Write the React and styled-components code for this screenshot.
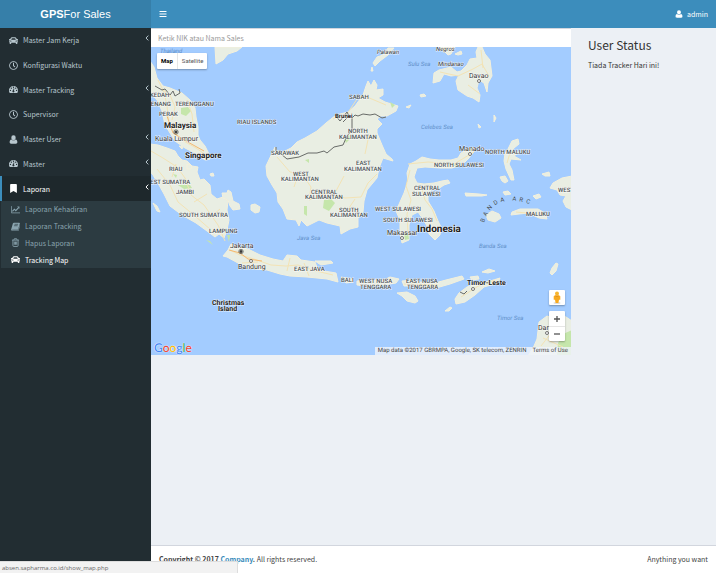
import React from "react";
import styled, { createGlobalStyle, css } from "styled-components";
import { FaBars, FaBookmark, FaCar, FaRegClock } from "react-icons/fa";

const GlobalStyle = createGlobalStyle`
  *, *::before, *::after { box-sizing: border-box; }
  body {
    margin: 0;
    background: #ecf0f5;
    color: #333;
    font-family: "Noto Sans CJK SC", "Noto Sans", sans-serif;
    font-size: 7px;
    line-height: 12px;
  }
  button, input { font: inherit; margin: 0; padding: 0; border: 0; }
  a { color: inherit; text-decoration: none; }
  ul { margin: 0; padding: 0; list-style: none; }
`;

const Page = styled.div`
  display: grid;
  grid-template-columns: 151px 1fr;
  grid-template-rows: 28px 1fr;
  min-height: 100vh;
`;

const Logo = styled.a`
  display: flex;
  align-items: center;
  justify-content: center;
  background: #367fa9;
  color: #fff;
  font-family: "Liberation Sans", Arial, sans-serif;
  font-size: 11px;
  line-height: 16px;
`;

const TopBar = styled.header`
  display: flex;
  align-items: center;
  justify-content: space-between;
  padding: 0 8px;
  background: #3c8dbc;
  color: #fff;
`;

const BarButton = styled.button`
  display: flex;
  align-items: center;
  gap: 4px;
  background: none;
  color: #fff;
  cursor: pointer;
  svg { width: 8px; height: 8px; }
`;

const Sidebar = styled.nav`
  background: #222d32;
`;

const Menu = styled.ul`
  display: grid;
  grid-template-rows: repeat(7, 1fr);
  height: 173px;
`;

const activeItem = css`
  background: #1e282c;
  border-left-color: #3c8dbc;
  color: #fff;
`;

const MenuLink = styled.a`
  display: grid;
  grid-template-columns: 10px 1fr 4px;
  gap: 4px;
  align-items: center;
  height: 100%;
  padding: 0 2px 0 7px;
  border-left: 2px solid transparent;
  color: #b8c7ce;
  ${(p) => p.$active && activeItem}
  > svg { width: 9px; height: 9px; }
  > svg:last-child { width: 4px; height: 6px; margin-bottom: 4px; }
`;

const SubMenu = styled.ul`
  display: grid;
  grid-template-rows: repeat(4, 1fr);
  height: 67px;
  margin-left: 1px;
  background: #2c3b41;
`;

const SubLink = styled.a`
  display: grid;
  grid-template-columns: 10px 1fr;
  gap: 4px;
  align-items: center;
  height: 100%;
  padding-left: 10px;
  color: ${(p) => (p.$active ? "#fff" : "#8aa4af")};
  svg { width: 9px; height: 9px; }
`;

const Main = styled.div`
  display: flex;
  flex-direction: column;
  min-width: 0;
`;

const Content = styled.main`
  flex: 1;
  display: grid;
  grid-template-columns: 420fr 145fr;
  align-items: start;
`;

const SearchBox = styled.input`
  display: block;
  width: 100%;
  height: 19px;
  padding: 0 7px;
  border-top: 1px solid #d2d6de;
  background: #fff;
  color: #555;
  outline: none;
  &::placeholder { color: #999; opacity: 1; }
`;

const MapFrame = styled.div`
  position: relative;
  height: 308px;
  overflow: hidden;
  background: #a3ccff;
  font-family: Roboto, sans-serif;
  text-rendering: geometricPrecision;
`;

const MapDrawing = styled.svg`
  display: block;
  width: 100%;
  height: 100%;
`;

const TypeSwitch = styled.div`
  position: absolute;
  top: 6px;
  left: 6px;
  display: flex;
  height: 16px;
  background: #fff;
  border-radius: 1px;
  box-shadow: 0 1px 2px rgba(0, 0, 0, 0.3);
`;

const TypeButton = styled.button`
  padding: 0 4px;
  background: none;
  color: ${(p) => (p.$active ? "#000" : "#565656")};
  font-size: 6px;
  font-weight: ${(p) => (p.$active ? 700 : 400)};
  & + & { border-left: 1px solid #e6e6e6; }
`;

const MapTools = styled.div`
  position: absolute;
  right: 6px;
  bottom: 14px;
  display: grid;
  gap: 6px;
  width: 16px;
`;

const ToolGroup = styled.div`
  display: grid;
  background: #fff;
  border-radius: 1px;
  box-shadow: 0 1px 2px rgba(0, 0, 0, 0.3);
`;

const ToolButton = styled.button`
  display: grid;
  place-items: center;
  height: 15px;
  background: none;
  & + & { border-top: 1px solid #e6e6e6; }
`;

const GoogleMark = styled.a`
  position: absolute;
  left: 3px;
  bottom: 0;
  font-family: Lato, sans-serif;
  font-size: 12px;
  font-weight: 500;
  line-height: 15px;
  text-shadow: 0 0 1px #fff, 0 0 1px #fff;
`;

const Letter = styled.span`
  color: ${(p) => p.$tint};
`;

const Attribution = styled.div`
  position: absolute;
  right: 0;
  bottom: 0;
  display: flex;
  gap: 6px;
  padding: 0 3px;
  background: rgba(240, 244, 250, 0.8);
  color: #444;
  font-size: 6px;
  line-height: 8px;
`;

const Status = styled.section`
  padding: 8px 17px;
  h1 {
    margin: 0 0 6px;
    font-size: 12px;
    font-weight: 400;
    line-height: 17px;
  }
  p { margin: 0; }
`;

const Footer = styled.footer`
  display: flex;
  justify-content: space-between;
  height: 28px;
  padding: 7px 8px;
  border-top: 1px solid #d2d6de;
  background: #fff;
  color: #444;
  a { color: #3c8dbc; }
`;

const LinkHint = styled.div`
  position: fixed;
  left: 0;
  bottom: 0;
  width: 238px;
  height: 12px;
  padding-left: 2px;
  border-top: 1px solid #ddd;
  border-right: 1px solid #ddd;
  background: #f2f2f2;
  color: #666;
  font-family: "Open Sans", sans-serif;
  font-size: 6px;
`;

const UserIcon = () => (
  <svg viewBox="0 0 14 14" fill="currentColor" aria-hidden="true">
    <path d="M7 0.5a3.4 3.4 0 0 1 3.4 3.6C10.400 6.200 9 8 7 8S3.600 6.200 3.600 4.100A3.400 3.400 0 0 1 7 .5zM3.800 6.900C5.500 9.300 8.500 9.300 10.200 6.900 12.300 7 13 9 13 11.400c0 1.400-.9 2.100-2.100 2.100H3.100C1.900 13.500 1 12.800 1 11.400 1 9 1.700 7 3.800 6.900z" />
  </svg>
);

const GaugeIcon = () => (
  <svg viewBox="0 0 14 14" aria-hidden="true">
    <path fill="currentColor" d="M7 1.500a7 7 0 0 1 7 7c0 1.400-.4 2.700-1.100 3.800H1.100A7 7 0 0 1 7 1.500z" />
    <g fill="#222d32">
      <circle cx="2.200" cy="8.500" r="1" /><circle cx="3.700" cy="5" r="1" /><circle cx="7" cy="3.500" r="1" />
      <circle cx="10.400" cy="5" r="1" /><circle cx="11.800" cy="8.500" r="1" />
      <path d="M7.300 5.200l1 .3-.6 3a1.600 1.600 0 1 1-1.200-.2z" />
    </g>
  </svg>
);

const ChartIcon = () => (
  <svg viewBox="0 0 16 14" fill="none" stroke="currentColor" aria-hidden="true">
    <path strokeWidth="1.400" d="M.7 1v12H16" />
    <path strokeWidth="2" d="M2.500 10.500L6 6.500l2.500 2.500 5-5.500" />
    <path fill="currentColor" stroke="none" d="M10.800 1.500H15v4.200z" />
  </svg>
);

const BookIcon = () => (
  <svg viewBox="0 0 14 14" aria-hidden="true">
    <path fill="currentColor" d="M4.600 1h8.100c1 0 1.300.7 1.100 1.500l-2.500 8.400c-.3.900-.8 1.300-1.700 1.300H2.400c-.6 0-.8.3-.6.600.2.300.5.300.9.300h7.400c.7 0 1-.3 1.200-.8L13.700 5c.5.300.4.700.3 1.200l-2.200 6.900c-.3.700-.8.900-1.600.9H2.400C.9 14-.2 12.500.3 11.200L2.900 2.500C3.200 1.500 3.700 1 4.600 1z" />
    <path stroke="#2c3b41" d="M5.500 3.600H11M4.800 5.800h5.500" />
  </svg>
);

const TrashIcon = () => (
  <svg viewBox="0 0 14 14" fill="none" stroke="currentColor" strokeWidth="1.400" aria-hidden="true">
    <path d="M1.500 3.300h11M4.500 3l.7-1.800h3.600L9.500 3M3 3.500v8.300c0 .8.400 1.300 1 1.300h6c.6 0 1-.5 1-1.300V3.500M5.200 5.500v5M7 5.500v5M8.800 5.500v5" />
  </svg>
);

const Chevron = () => (
  <svg viewBox="0 0 4 6" fill="none" stroke="currentColor" aria-hidden="true">
    <path d="M3.300.6L1 3l2.300 2.400" />
  </svg>
);

const Pegman = () => (
  <svg width="8" height="13" viewBox="0 0 8 13" aria-hidden="true">
    <ellipse cx="4" cy="12" rx="3.500" ry="1" fill="#ddd" />
    <circle cx="4" cy="2.400" r="2" fill="#f7b52c" />
    <path fill="#f7a91e" d="M2 4.300h4l1.300 1v3.500H6l-.6 3.200H2.600L2 8.800H.7V5.300z" />
    <path fill="#cf7b14" d="M2.600 4.400L4 5.200l1.400-.8v1.100H2.600z" />
  </svg>
);

const menu = [
  { label: "Master Jam Kerja", Icon: FaCar, nested: true },
  { label: "Konfigurasi Waktu", Icon: FaRegClock },
  { label: "Master Tracking", Icon: GaugeIcon, nested: true },
  { label: "Supervisor", Icon: FaRegClock },
  { label: "Master User", Icon: UserIcon, nested: true },
  { label: "Master", Icon: GaugeIcon, nested: true },
  { label: "Laporan", Icon: FaBookmark, nested: true, active: true },
];

const reports = [
  { label: "Laporan Kehadiran", Icon: ChartIcon },
  { label: "Laporan Tracking", Icon: BookIcon },
  { label: "Hapus Laporan", Icon: TrashIcon },
  { label: "Tracking Map", Icon: FaCar, active: true },
];

const land = [
  "M150 61l4 6 3 11 6 8 7 2 12 5 8 7 5 8 1 9 2 10 0 8 2 5 5 6 4 8 1 5-5 1-8-6-12-6-10-7-5-8-5-8-3-14-5-11-7-8z",
  "M150 144l8 1 9 3 8 3 3 5 4 4 5 1 5 5 6 1-1 5 3 8 4-1 6 6 1 9 6 5 6-2 5 4-1 9 2 10-2 10-3 8-5-4-4 3-8-6-11-8-14-8-12-9-6-12-5-9-6-10-5-6z",
  "M222 193l5 0 1-3 3 2 2 9 6 3 1 5-7 1-3-4-2-6-5-2z",
  "M251 205l4-1 5 3-1 5-4 1-4-3z",
  "M153 203l4 3 3 6-3-1z",
  "M228 250l3-6 7 3 10 2 12 6 13 4 10 2 4-6 10 1 4 4 14 2 3 8 18 3 2 9-11-3-20-2-17-1-10-2-13-4-20-2-9-5-11-6-4-1z",
  "M315 261l16 0 2 2-12 2z",
  "M275 147l2 4 6 1 8-4 6-6 8-4 12-7 9-8 10-8 12-3 7-6 8-11 3-9 2-5 3 5 3-6 3 5-1 5 7-1 0 6-5 3 7 4 13 4-2 5-9 5-6 0-4 3 5 5-5 5 0 4 5 12 4 9 6 5 1 2-10-3-4 10-2 10-10 12-3 11-1 11-5 6 0 9-8 2-9 5-1-8-13-3-8-3-12 6-6-6-2 6-3-6-9-1-4-10-5-7-1-9-5-8-5-9-1-10z",
  "M373 63l4-6 6-2 5-7h6l-6 7-8 6-5 5zM372 67l1 4-2 0z",
  "M404 193l4-12-1-8 3-9 6-3 6-4 8 2 9 1 12 0 7-2 3-5 7-4 5-2 2 3-6 8-7 7-10 3-12 0-15-1-8 1-3 9 3 6 7 1 10-1 8-2 6-1 2 3-6 2-6 4-7 1-3 4 0 7 6 10 4 10 3 6-1 8-5 5-6-6-2-8-4-7-5-7-6 3-3 10 0 15-7 3-2-9 0-14-4-9z",
  "M433 83l1-10 5-3 12-3 6 5 4-1 6-6 3-6 7-1-1-6 2-5 4 0 3 7 5 6 2 16-4 7-1 9-3-9-5-3-2 8 3 7-1 7-6-4-6-2-9-6-2-9 3-6-8 1-7-2-4 7z",
  "M439 47l4 3 5 5 3-1 4-7z",
  "M455 54l6-3 1 3-4 1z",
  "M215 47h27l-5 4-9 3-5 6-7 4z",
  "M505 153l3-4 4-8 6-2 1 5-5 4-3 4 8 0-5 4 7 4-10-1-2 5 3 6 2 10-3 0-5-11-2-8z",
  "M500 177l5-1 3 5-3 2-3-2zM503 192l5-1 3 3-6 1z",
  "M465 193l14 1 8 1-5 1-16 0z",
  "M486 215l6-4 7 3 2 4-6 4-7-2z",
  "M512 212l8-3 10 0 8 0 7 4 2 6-8-1-10-5-10 1-8 1z",
  "M542 174l7-2 1 4-5 0zM533 196l6-2 2 3-5 2z",
  "M572 176l-10 2-9 5-3 5 7 2 3 5 6 1-3 5 3 6 6 3z",
  "M341 277l11 2 1 3-7 1z",
  "M357 281l8-1 3 3 6-3 10 0 6-3 9 2-3 4-12 2-18 1-9-1z",
  "M402 281l10-1 8 2 15 1 11-3 16-4 2 3-14 5-14 4-20-2-12 0z",
  "M397 293l10-1 8 4 3 5-3 2-8-2-5-5z",
  "M482 272l7-3 6 2-7 2zM470 277l8-1 1 3-7 1z",
  "M500 278l-2 5-14 4-9 8-10 7-9 2-1-5 4-6 8-6 12-4 11-2z",
  "M445 311l5-4 2 1-3 3zM550 273l2-5 4-5 2 1-2 7-4 4z",
  "M528 356l6-10 3-7 2-17 8-6 6 2 5-4 8 3 6 4v35z",
  "M494 115l2 3-2 4zM478 124l3 3-2 1zM420 95l4-1 2 2-5 1zM406 107l5-2-2 3z",
  "M187 164l5 2-1 3-4 0zM210 174l3-1 1 3-3 0zM179 146l4 1-1 2z",
];

const roads = [
  "M158 80l6 12 3 14 2 17 11 16 16 9 10 7M187 100l5 14 2 18M162 89l8 6 5 12-3 13",
  "M151 151l12 7 14 9 8 11 6 17 13 10 14 20 7 16M157 169l13 16 8 17 17 14 16 14M176 164l-4 13M207 194l-13 8M220 209l-12 10",
  "M230 250l10 5 14 4 17 6 15 1 12-1 14 5 21 5M242 263l16-1M290 258l-3 13M304 263l5 13",
  "M277 157l13 15 12 2 9 13-2 13 18-7 18 5 16-1 7-14 9-9M299 172l-5 15M333 119l14-5 12-18 8 1 19 8M344 176l-8 15M355 199l-8 12M369 135l-4 19",
  "M408 164l20-2 26 2 20-12M410 170l-4 16 5 14-4 14 1 19M421 186l4 14 7 9 5 12",
  "M440 72l18 4 15-7 9-5 7 12M468 85l12 9M481 50l2 18M510 153l-3 10M541 346l18-23M543 338l20 9",
  "M461 297l19-12 15-5M516 212l21 2M404 284l34 1",
];

const borders = [
  "M155 86l7 4 3-1 5 6 3-4 2 5 5-3-1-4",
  "M276 147l0 4 5 3 6 5 12-2 9-4 9 0 7-2 3 2 7-6 9-2 4-9 5-6 0-12 3-3 3 1 5-2 7 1 5-1 7 4 4-1",
  "M335 115l5 6 7-9 2 4-6 6M460 292l4 2 3-3",
];

const forest = [
  "M181 108l7-1 3 4-5 5-5-2z", "M324 200l7-1 4 4-6 8-6-3z", "M178 185l12 0 2 3-8 1z",
  "M173 174l4 1-1 3z", "M304 206l3 0 0 10-3-2z", "M344 138l5-3 1 4-4 4z", "M390 102l5 3-3 3z",
  "M563 334l9-4v26h-15l1-13z", "M206 240l4 1 3 4z", "M453 165l6-1-2 3z", "M404 233l4 0 1 6-4 1z",
  "M305 160l4-1 0 4zM227 235l3 0-1 7z",
];

const regions = [
  ["KEDAH", 150, 97], ["PENANG", 147, 106], ["TERENGGANU", 175, 106], ["PERAK", 159, 116],
  ["RIAU ISLANDS", 237, 124], ["RIAU", 169, 171], ["WEST SUMATRA", 145, 184], ["JAMBI", 176, 194],
  ["SOUTH SUMATRA", 179, 217], ["LAMPUNG", 209, 233], ["SABAH", 349, 99], ["SARAWAK", 271, 155],
  ["NORTH", 348, 133], ["KALIMANTAN", 339, 139], ["EAST", 356, 165], ["KALIMANTAN", 344, 171],
  ["WEST", 293, 176], ["KALIMANTAN", 281, 181], ["CENTRAL", 311, 194], ["KALIMANTAN", 305, 199],
  ["SOUTH", 339, 212], ["KALIMANTAN", 330, 217], ["EAST JAVA", 294, 271], ["BALI", 341, 282],
  ["WEST NUSA", 359, 283], ["TENGGARA", 360, 289], ["EAST NUSA", 406, 283], ["TENGGARA", 407, 289],
  ["WEST SULAWESI", 375, 211], ["SOUTH SULAWESI", 383, 222], ["CENTRAL", 414, 190],
  ["SULAWESI", 412, 196], ["NORTH SULAWESI", 434, 167], ["NORTH MALUKU", 485, 154],
  ["MALUKU", 526, 216], ["WEST", 558, 192],
];

const seas = [
  ["Thailand", 160, 53], ["Sulu Sea", 408, 66], ["Celebes Sea", 421, 129],
  ["Java Sea", 297, 240], ["Banda Sea", 479, 248], ["Timor Sea", 497, 320],
];

const cities = [
  ["Kuala Lumpur", 155, 141], ["Davao", 469, 78], ["Manado", 459, 151], ["Makassar", 387, 235],
  ["Jakarta", 230, 248], ["Bandung", 238, 269], ["Palawan", 377, 54, true], ["Negros", 436, 51, true],
  ["Mindanao", 438, 66, true], ["Darwin", 538, 330],
];

const countries = [
  ["Malaysia", 164, 128, 8], ["Singapore", 185, 158, 8], ["Brunei", 335, 118, 6],
  ["Indonesia", 417, 232, 10], ["Timor-Leste", 467, 285, 7], ["Christmas", 212, 305, 7],
  ["Island", 218, 311, 7],
];

const towns = [[479, 81], [470, 154], [402, 238], [251, 261], [473, 289], [547, 333]];

const MapLabel = styled.text`
  fill: ${(p) => p.$tint || "#4b5154"};
  stroke: ${(p) => (p.$plain ? "none" : "rgba(255, 255, 255, 0.75)")};
  stroke-width: 1px;
  paint-order: stroke;
  font-size: ${(p) => p.$size || 6}px;
  font-weight: ${(p) => p.$weight || 400};
  font-style: ${(p) => (p.$italic ? "italic" : "normal")};
`;

const ArcLabel = styled(MapLabel)`
  letter-spacing: 3px;
`;

function SalesMap() {
  return (
    <MapDrawing viewBox="151 47 420 308" preserveAspectRatio="xMidYMid slice" role="img" aria-label="Map of Indonesia">
      <g fill="#e9eee3" stroke="#f3f0dc" strokeWidth="1" strokeLinejoin="round">
        {land.map((d) => <path key={d} d={d} />)}
      </g>
      <g fill="#c5e6ab">{forest.map((d) => <path key={d} d={d} />)}</g>
      <g fill="none" stroke="#f3e3b5" strokeWidth="1" strokeLinejoin="round">
        {roads.map((d) => <path key={d} d={d} />)}
      </g>
      <path fill="none" stroke="#f5b971" d="M167 116l6 17 13 8 18 10M229 250l11 3 8 6 14 2" />
      <g fill="none" stroke="#686b68" strokeWidth="1" strokeLinejoin="round">
        {borders.map((d) => <path key={d} d={d} />)}
      </g>
      {seas.map(([t, x, y]) => <MapLabel key={t} x={x} y={y} $plain $italic $tint="#5f8fc9">{t}</MapLabel>)}
      {regions.map(([t, x, y]) => <MapLabel key={`${t}${x}`} x={x} y={y} $weight={500}>{t}</MapLabel>)}
      <path id="banda" fill="none" d="M484 223Q490 202 508 201 524 199 552 214" />
      <ArcLabel $plain>
        <textPath href="#banda">BANDA ARC</textPath>
      </ArcLabel>
      {cities.map(([t, x, y, italic]) => (
        <MapLabel key={t} x={x} y={y} $size={italic ? 6 : 7} $italic={italic} $tint="#333">{t}</MapLabel>
      ))}
      {countries.map(([t, x, y, size]) => (
        <MapLabel key={t} x={x} y={y} $size={size} $weight={700} $tint="#222">{t}</MapLabel>
      ))}
      <g fill="#fff" stroke="#555" strokeWidth="0.8">
        {towns.map(([x, y]) => <circle key={x} cx={x} cy={y} r="1.500" />)}
      </g>
      <g fill="#333" stroke="#333">
        <circle cx="176" cy="132" r="1" /><circle cx="241" cy="251.500" r="1" />
        <circle cx="176" cy="132" r="2.200" fill="none" strokeWidth=".6" />
        <circle cx="241" cy="251.500" r="2.200" fill="none" strokeWidth=".6" />
      </g>
    </MapDrawing>
  );
}

const google = [["G", "#4285f4"], ["o", "#ea4335"], ["o", "#fbbc05"], ["g", "#4285f4"], ["l", "#34a853"], ["e", "#ea4335"]];

export default function App() {
  return (
    <>
      <GlobalStyle />
      <Page>
        <Logo href="#"><b>GPS</b>For Sales</Logo>
        <TopBar>
          <BarButton aria-label="Toggle navigation"><FaBars /></BarButton>
          <BarButton><UserIcon />admin</BarButton>
        </TopBar>
        <Sidebar>
          <Menu>
            {menu.map(({ label, Icon, nested, active }) => (
              <li key={label}>
                <MenuLink href="#" $active={active}>
                  <Icon /><span>{label}</span>{nested && <Chevron />}
                </MenuLink>
              </li>
            ))}
          </Menu>
          <SubMenu>
            {reports.map(({ label, Icon, active }) => (
              <li key={label}>
                <SubLink href="#" $active={active}><Icon /><span>{label}</span></SubLink>
              </li>
            ))}
          </SubMenu>
        </Sidebar>
        <Main>
          <Content>
            <section>
              <SearchBox type="text" placeholder="Ketik NIK atau Nama Sales" aria-label="Ketik NIK atau Nama Sales" />
              <MapFrame>
                <SalesMap />
                <TypeSwitch>
                  <TypeButton $active>Map</TypeButton>
                  <TypeButton>Satellite</TypeButton>
                </TypeSwitch>
                <MapTools>
                  <ToolGroup><ToolButton aria-label="Street View"><Pegman /></ToolButton></ToolGroup>
                  <ToolGroup>
                    <ToolButton aria-label="Zoom in">
                      <svg width="6" height="6" viewBox="0 0 6 6"><path stroke="#555" strokeWidth="1.300" d="M0 3h6M3 0v6" /></svg>
                    </ToolButton>
                    <ToolButton aria-label="Zoom out">
                      <svg width="6" height="6" viewBox="0 0 6 6"><path stroke="#555" strokeWidth="1.300" d="M0 3h6" /></svg>
                    </ToolButton>
                  </ToolGroup>
                </MapTools>
                <GoogleMark href="#">
                  {google.map(([c, tint], i) => <Letter key={i} $tint={tint}>{c}</Letter>)}
                </GoogleMark>
                <Attribution>
                  <span>Map data ©2017 GBRMPA, Google, SK telecom, ZENRIN</span>
                  <a href="#">Terms of Use</a>
                </Attribution>
              </MapFrame>
            </section>
            <Status>
              <h1>User Status</h1>
              <p>Tiada Tracker Hari ini!</p>
            </Status>
          </Content>
          <Footer>
            <span><b>Copyright © 2017 <a href="#">Company</a>.</b> All rights reserved.</span>
            <span>Anything you want</span>
          </Footer>
        </Main>
      </Page>
      <LinkHint>absen.sapharma.co.id/show_map.php</LinkHint>
    </>
  );
}
